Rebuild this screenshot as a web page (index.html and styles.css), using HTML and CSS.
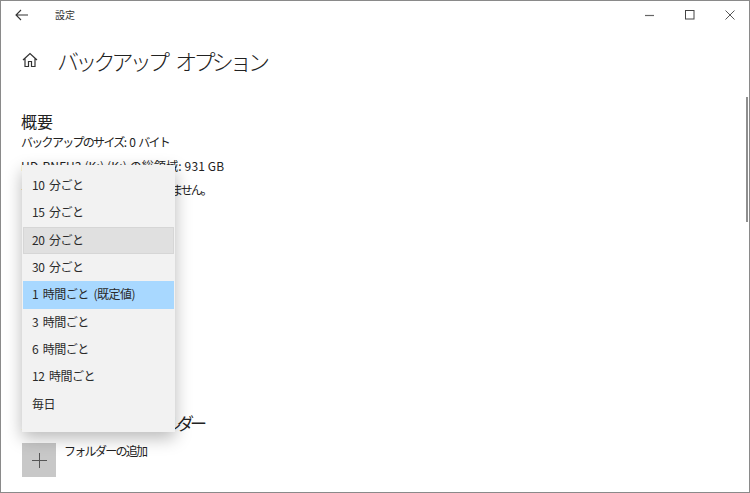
FILE: index.html
```html
<!DOCTYPE html>
<html lang="ja">
<head>
<meta charset="utf-8">
<title>設定</title>
<link rel="stylesheet" href="styles.css">
</head>
<body>
<div class="window">
  <header class="titlebar">
    <div class="title-left">
      <svg class="back" width="14" height="12" viewBox="0 0 14 12"><path d="M6 1 1 6l5 5M1 6h12" fill="none" stroke="#333" stroke-width="1.1"/></svg>
      <span class="app-name">設定</span>
    </div>
    <div class="controls">
      <svg width="10" height="10" viewBox="0 0 10 10"><path d="M0 5.500h9" stroke="#666" stroke-width="1.2"/></svg>
      <svg width="10" height="10" viewBox="0 0 10 10"><rect x=".5" y=".5" width="8.500" height="8.500" fill="none" stroke="#444" stroke-width="1"/></svg>
      <svg width="10" height="10" viewBox="0 0 10 10"><path d="M.5.5l9 9M9.500.5l-9 9" stroke="#444" stroke-width=".9"/></svg>
    </div>
  </header>
  <main class="content">
    <div class="page-head">
      <svg class="home" width="16" height="16" viewBox="0 0 16 16"><path d="M1 8 8 1.500 15 8M3 6.500V14.500h3.500V9.500h3V14.500H13V6.500" fill="none" stroke="#333" stroke-width="1.200"/></svg>
      <h1>バックアップ オプション</h1>
    </div>
    <section class="overview">
      <h2>概要</h2>
      <p class="size">バックアップのサイズ: 0 バイト</p>
      <p class="total">HD-PNFU3 (K:) (K:) の総領域: 931 GB</p>
      <p class="status">データのバックアップはまだありません。</p>
    </section>
    <section class="folders">
      <h2>バックアップ対象のフォルダー</h2>
      <div class="add-row">
        <span class="add-btn"><svg width="15" height="15" viewBox="0 0 15 15"><path d="M7.500 0v15M0 7.500h15" stroke="#555" stroke-width="1"/></svg></span>
        <span class="add-label">フォルダーの追加</span>
      </div>
    </section>
  </main>
  <div class="scrollbar"></div>
  <ul class="menu">
    <li>10 分ごと</li>
    <li>15 分ごと</li>
    <li class="hover">20 分ごと</li>
    <li>30 分ごと</li>
    <li class="selected">1 時間ごと (既定値)</li>
    <li>3 時間ごと</li>
    <li>6 時間ごと</li>
    <li>12 時間ごと</li>
    <li>毎日</li>
  </ul>
</div>
</body>
</html>
```
FILE: styles.css
```css
* { box-sizing: border-box; }
html, body { margin: 0; height: 100%; }
body {
  font-family: "Noto Sans CJK JP", "Noto Sans", sans-serif;
  color: #222;
  background: #fff;
  overflow: hidden;
}
.window {
  position: relative;
  width: 750px;
  height: 493px;
  border: 1px solid #8a8a8a;
  overflow: hidden;
}
.titlebar {
  display: flex;
  justify-content: space-between;
  align-items: center;
  height: 27px;
}
.title-left { display: flex; align-items: center; padding-left: 14px; }
.back { display: block; }
.app-name { margin-left: 26px; font-size: 10px; color: #333; }
.controls { display: flex; gap: 30px; padding-right: 14px; align-items: center; }
.controls svg { display: block; }
.content { padding: 0 20px; }
.page-head { display: flex; align-items: center; height: 32px; margin-top: 16px; }
.home { display: block; margin: 0 19px 0 1px; }
h1 { margin: 0; font-size: 22px; font-weight: 300; line-height: 32px; color: #222; letter-spacing: -3.800px; word-spacing: 8px; }
h2 { margin: 0; font-size: 16px; font-weight: 400; line-height: 24px; }
.overview { margin-top: 33px; }
.overview p { margin: 0; font-size: 12px; line-height: 24px; height: 24px; }
.overview .size { line-height: 18px; height: 21px; letter-spacing: -1.700px; word-spacing: 3px; }
.overview .total { letter-spacing: .15px; }
.overview .status { letter-spacing: -2px; }
.folders { margin-top: 209px; }
.folders h2 { font-size: 17px; letter-spacing: -4px; }
.add-row { display: flex; margin: 8px 0 0 1px; }
.add-btn {
  display: flex;
  width: 34px;
  height: 34px;
  align-items: center;
  justify-content: center;
  background: #c8c8c8;
}
.add-label { margin-left: 8px; font-size: 12px; line-height: 16px; letter-spacing: -1.700px; }
.scrollbar {
  position: absolute;
  top: 96px;
  right: 1px;
  width: 2px;
  height: 125px;
  background: #8f8f8f;
}
.menu {
  position: absolute;
  left: 21px;
  top: 164px;
  width: 153px;
  height: 267px;
  margin: 0;
  padding: 7px 1px 0;
  list-style: none;
  background: #f2f2f2;
  box-shadow: 0 6px 16px rgba(0,0,0,.28);
}
.menu li {
  height: 27.350px;
  padding-left: 9px;
  font-size: 12px;
  line-height: 26px;
  color: #2a2a2a;
  letter-spacing: -.5px;
  word-spacing: 2.500px;
}
.menu .hover {
  background: #e0e0e0;
  box-shadow: inset 0 0 0 1px #d6d6d6;
}
.menu .selected { background: #a8d8ff; }
```
